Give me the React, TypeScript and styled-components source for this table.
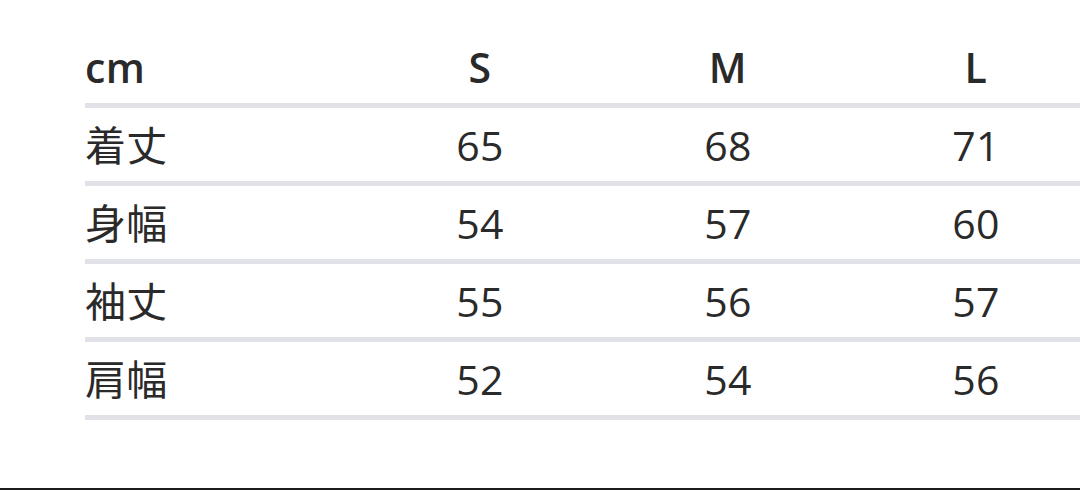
import styled, { createGlobalStyle } from 'styled-components';

const GlobalStyle = createGlobalStyle`
  html, body {
    margin: 0;
    padding: 0;
    background: #ffffff;
    overflow: hidden;
  }
`;

const Page = styled.div`
  height: 490px;
  box-sizing: border-box;
  border-bottom: 2px solid #1c1c1c;
  padding-left: 85px;
  font-family: 'Open Sans', 'Noto Sans CJK JP', sans-serif;
  color: #2a2a2a;
`;

const Table = styled.div`
  width: 1015px;
  display: flex;
  flex-direction: column;
`;

const Row = styled.div<{ header?: boolean }>`
  display: grid;
  grid-template-columns: 271px 248px 248px 248px;
  height: ${(p) => (p.header ? '95px' : '73px')};
  align-items: ${(p) => (p.header ? 'end' : 'center')};
  padding-bottom: ${(p) => (p.header ? '8px' : '0')};
  box-sizing: content-box;
  border-bottom: 5px solid #e1e2e8;
`;

const Label = styled.div<{ bold?: boolean }>`
  font-size: 41px;
  font-weight: ${(p) => (p.bold ? 600 : 400)};
  letter-spacing: ${(p) => (p.bold ? '0.5px' : '0.3px')};
  line-height: 56px;
  white-space: nowrap;
`;

const Cell = styled(Label)`
  text-align: center;
`;

const sizes = ['S', 'M', 'L'];

const rows: [string, number[]][] = [
  ['着丈', [65, 68, 71]],
  ['身幅', [54, 57, 60]],
  ['袖丈', [55, 56, 57]],
  ['肩幅', [52, 54, 56]],
];

export default function App() {
  return (
    <>
      <GlobalStyle />
      <Page>
        <Table>
          <Row header>
            <Label bold>cm</Label>
            {sizes.map((s) => (
              <Cell bold key={s}>
                {s}
              </Cell>
            ))}
          </Row>
          {rows.map(([name, values]) => (
            <Row key={name}>
              <Label>{name}</Label>
              {values.map((v, i) => (
                <Cell key={i}>{v}</Cell>
              ))}
            </Row>
          ))}
        </Table>
      </Page>
    </>
  );
}
